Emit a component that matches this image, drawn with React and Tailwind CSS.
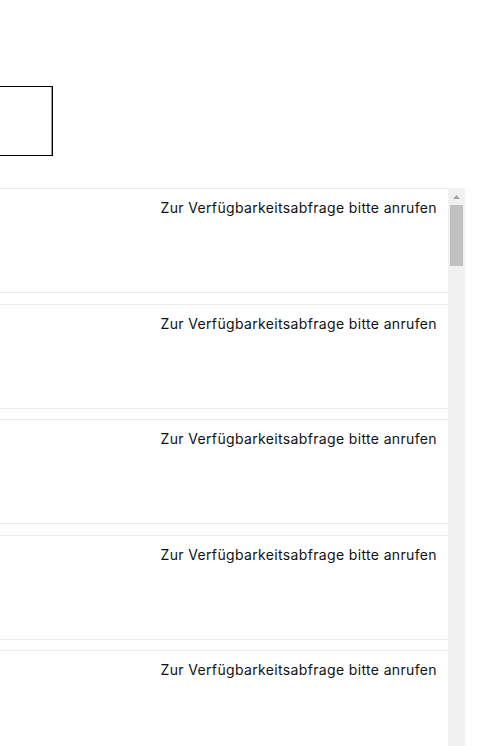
const rows = [0, 1, 2, 3, 4];

export default function App() {
  return (
    <div className="h-[746px] w-[488px] overflow-hidden bg-white font-['Inter',sans-serif] text-[#111]">
      {/* Header */}
      <div className="h-[188px] pt-[86px]">
        <div className="-ml-[10px] h-[70px] w-[63px] border border-black shadow-[inset_-1px_0_0_#9a9a9a]" />
      </div>

      {/* List + scrollbar */}
      <div className="flex h-[558px] w-[465px]">
        <div className="h-full w-[448px] overflow-hidden">
          {rows.map((i) => (
            <div
              key={i}
              className="mb-[10.5px] h-[105px] border-y border-[#ebebeb] bg-white pr-[11px] pt-[6px] text-right"
            >
              <span className="text-[14px] leading-[18px] tracking-[0.35px]">
                Zur Verfügbarkeitsabfrage bitte anrufen
              </span>
            </div>
          ))}
        </div>
        <div className="flex h-full w-[17px] flex-col items-center bg-[#f1f1f1]">
          <div className="flex h-[17px] w-full items-center justify-center">
            <svg width="7" height="4" viewBox="0 0 7 4">
              <path d="M3.5 0 L7 4 L0 4 Z" fill="#a3a3a3" />
            </svg>
          </div>
          <div className="h-[61px] w-[13px] bg-[#c1c1c1]" />
        </div>
      </div>
    </div>
  );
}
